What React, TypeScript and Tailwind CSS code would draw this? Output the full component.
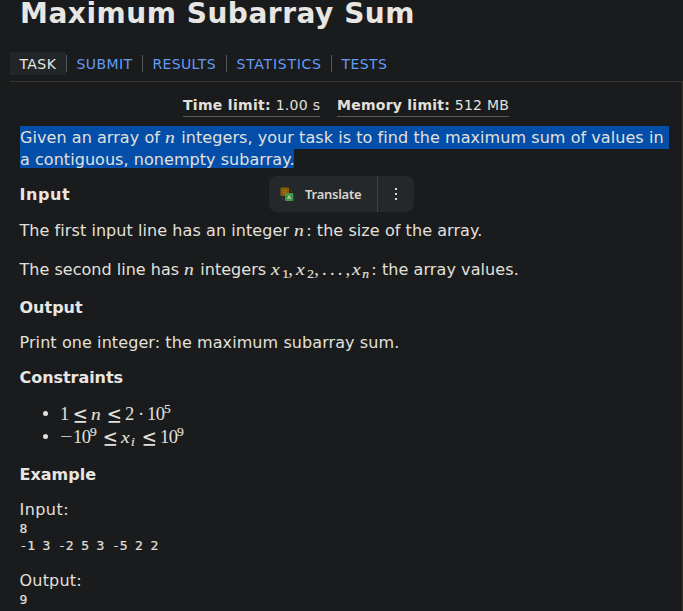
import type { ReactNode } from "react";

const math = "font-['Liberation_Serif','Times_New_Roman',serif]";

function V({ children, w }: { children: ReactNode; w: string }) {
  return (
    <span className={`inline-block text-[17.5px] italic leading-none tracking-normal ${math} ${w}`}>
      <span className="inline-block origin-left scale-x-112 [-webkit-text-stroke:0.1px]">{children}</span>
    </span>
  );
}

function R({ children, w, className = "" }: { children: ReactNode; w: string; className?: string }) {
  return <span className={`inline-block text-[18.5px] leading-none ${math} ${w} ${className}`}>{children}</span>;
}

function Leq({ w }: { w: string }) {
  return (
    <span className={`relative top-px inline-block text-[18px] leading-none font-['DejaVu_Math_TeX_Gyre','DejaVu_Serif',serif] ${w}`}>
      <span className="inline-block origin-center scale-y-120">≤</span>
    </span>
  );
}

function Sub({ children, w, className = "" }: { children: ReactNode; w: string; className?: string }) {
  return <span className={`relative top-[3px] inline-block text-[13.5px] leading-none tracking-normal [-webkit-text-stroke:0.2px] ${math} ${w} ${className}`}>{children}</span>;
}

function Sup({ children, w }: { children: ReactNode; w: string }) {
  return <span className={`relative -top-[7px] inline-block text-[13.5px] leading-none tracking-normal [-webkit-text-stroke:0.2px] ${math} ${w}`}>{children}</span>;
}

function Heading({ children, className }: { children: ReactNode; className: string }) {
  return <h2 className={`h-[22px] text-[16px] font-bold leading-[22px] text-[#e8e6e3] ${className}`}>{children}</h2>;
}

const tabs = [
  { label: "SUBMIT", box: "w-[76px]", text: "tracking-[0.4px]" },
  { label: "RESULTS", box: "w-[84px]", text: "tracking-[0.35px]" },
  { label: "STATISTICS", box: "w-[105px]", text: "tracking-[0.75px]" },
  { label: "TESTS", box: "w-[66px]", text: "tracking-[0.4px]" },
];

function Translate() {
  return (
    <div className="absolute left-[269px] top-[176px] flex h-[36px] w-[145px] items-center overflow-hidden rounded-[8px] bg-[#25282a]">
      <svg className="ml-[11px] shrink-0" width="15" height="15" viewBox="0 0 15 15">
        <rect x="0.500" y="0.500" width="8.500" height="8.500" rx="1" fill="#8d5c08" />
        <path d="M3 3.500h3.500M4.700 2.500v1M6 3.500c-.5 1.500-1.500 2.500-3 3M3.800 4.500c.5 1 1.200 1.500 2.200 2" fill="none" stroke="#b07919" strokeWidth=".6" />
        <rect x="5" y="6" width="8.300" height="8" rx="1" fill="#459447" />
        <path d="M7.700 12 9.200 8.500l1.500 3.500M8.200 11h2" fill="none" stroke="#a9d6a5" strokeWidth="1" />
        <path d="M10.500 3l1.500 1.200M2 11l1.500 1.500" stroke="#2c6b3a" strokeWidth="1" />
      </svg>
      <span className="ml-[10px] w-[72px] text-[13px] font-semibold leading-none tracking-[-0.25px] text-[#d8d5d0] font-['Noto_Sans',sans-serif]">Translate</span>
      <span className="flex h-full flex-1 items-center justify-center border-l border-[#3c4143]">
        <svg width="4" height="14" viewBox="0 0 4 14" fill="#d8d5d0">
          <rect x="1" y="1" width="2" height="2" />
          <rect x="1" y="6" width="2" height="2" />
          <rect x="1" y="11" width="2" height="2" />
        </svg>
      </span>
    </div>
  );
}

export default function App() {
  return (
    <div className="relative h-[611px] w-[683px] overflow-hidden bg-[#1a1b1c] font-['DejaVu_Sans',Verdana,sans-serif] text-[#e3e0dc]">
      <h1 className="ml-[20px] h-[32px] whitespace-nowrap text-[28px] font-bold leading-[27px] tracking-[0.53px] text-[#e8e6e3]">Maximum Subarray Sum</h1>
      <nav className="ml-[10px] mt-[20px] flex h-[29px] items-start text-[14px] leading-[24px]">
        <span className="h-[23px] w-[56px] bg-[#222628] pl-[9.5px] tracking-[0.4px] text-[#e8e6e3]">TASK</span>
        {tabs.map((t) => (
          <span key={t.label} className={`mt-[3px] h-[17px] border-l border-[#53595b] pl-[9.5px] leading-[19px] text-[#639cf5] ${t.box} ${t.text}`}>{t.label}</span>
        ))}
      </nav>
      <main className="ml-[10px] h-[530px] w-[673px] border-r border-t border-[#35352f] pl-[9.5px] text-[16px] leading-[22px] tracking-[0.085px]">
        <div className="ml-[163.5px] mt-[14px] flex h-[21px] gap-[17px] whitespace-nowrap text-[14px] leading-[18px]">
          <span className="w-[137px] border-b border-[#5b5b58] tracking-[0.3px]"><b>Time limit:</b> 1.00 s</span>
          <span className="w-[172px] border-b border-[#5b5b58] tracking-[0.25px]"><b>Memory limit:</b> 512 MB</span>
        </div>
        <div className="ml-[0.5px] mt-[9px] h-[42px] whitespace-nowrap">
          <div className="h-[23px] w-[649px] bg-[#024ea8] leading-[23px] tracking-[0.065px]">Given an array of <V w="w-[11px]">n</V> integers, your task is to find the maximum sum of values in</div>
          <div className="h-[19px] w-[274px] bg-[#024ea8] leading-[21px] tracking-[0.05px]">a contiguous, nonempty subarray.</div>
        </div>
        <Heading className="mt-[16px] tracking-[0.55px]">Input</Heading>
        <p className="mt-[14px] h-[22px] whitespace-nowrap tracking-[0.07px]">The first input line has an integer <V w="w-[12px]">n</V>: the size of the array.</p>
        <p className="mt-[17px] h-[22px] whitespace-nowrap"><span className="tracking-[0.02px]">The second line has <V w="w-[11px]">n</V> integers </span><V w="w-[11px]">x</V><Sub w="w-[6px]">1</Sub><R w="w-[8px]">,</R><V w="w-[11px]">x</V><Sub w="w-[7px]">2</Sub><R w="w-[38px]" className="tracking-[3.2px]">,...,</R><V w="w-[10px]">x</V><Sub w="w-[9px]" className="italic">n</Sub>: the array values.</p>
        <Heading className="mt-[16px] tracking-[0px]">Output</Heading>
        <p className="mt-[13px] h-[22px] whitespace-nowrap">Print one integer: the maximum subarray sum.</p>
        <Heading className="mt-[13px] tracking-[-0.05px]">Constraints</Heading>
        <ul className="mt-[16px] whitespace-nowrap tracking-normal">
          <li className="flex h-[23px] items-baseline pl-[23.5px]">
            <i className="relative -top-[4px] mr-[12px] size-[5px] rounded-full bg-[#e3e0dc]" />
            <R w="w-[13px]">1</R><Leq w="w-[18px]" /><V w="w-[16px]">n</V><Leq w="w-[18px]" /><R w="w-[13px]">2</R><R w="w-[9px]">·</R><R w="w-[17px]" className="tracking-[-0.5px]">10</R><Sup w="w-[8px]">5</Sup>
          </li>
          <li className="flex h-[23px] items-baseline pl-[23.5px]">
            <i className="relative -top-[4px] mr-[12px] size-[5px] rounded-full bg-[#e3e0dc]" />
            <R w="w-[13px]"><span className="inline-block origin-left scale-x-120">−</span></R><R w="w-[17px]" className="tracking-[-0.5px]">10</R><Sup w="w-[13px]">9</Sup><Leq w="w-[18px]" /><V w="w-[10px]">x</V><Sub w="w-[11px]" className="italic">i</Sub><Leq w="w-[18px]" /><R w="w-[17px]" className="tracking-[-0.5px]">10</R><Sup w="w-[8px]">9</Sup>
          </li>
        </ul>
        <Heading className="mt-[13px] tracking-[0px]">Example</Heading>
        <p className="mt-[13px] h-[22px] tracking-[0.45px]">Input:</p>
        <pre className="h-[34px] text-[13px] leading-[16px] tracking-[-0.12px] [-webkit-text-stroke:0.2px] font-['DejaVu_Sans_Mono',monospace]"><span className="block h-[17px]">8</span><span className="block h-[17px] leading-[15px]">-1 3 -2 5 3 -5 2 2</span></pre>
        <p className="mt-[15px] h-[22px] tracking-[0.2px]">Output:</p>
        <pre className="h-[17px] text-[13px] leading-[15px] [-webkit-text-stroke:0.2px] font-['DejaVu_Sans_Mono',monospace]">9</pre>
      </main>
      <Translate />
    </div>
  );
}
